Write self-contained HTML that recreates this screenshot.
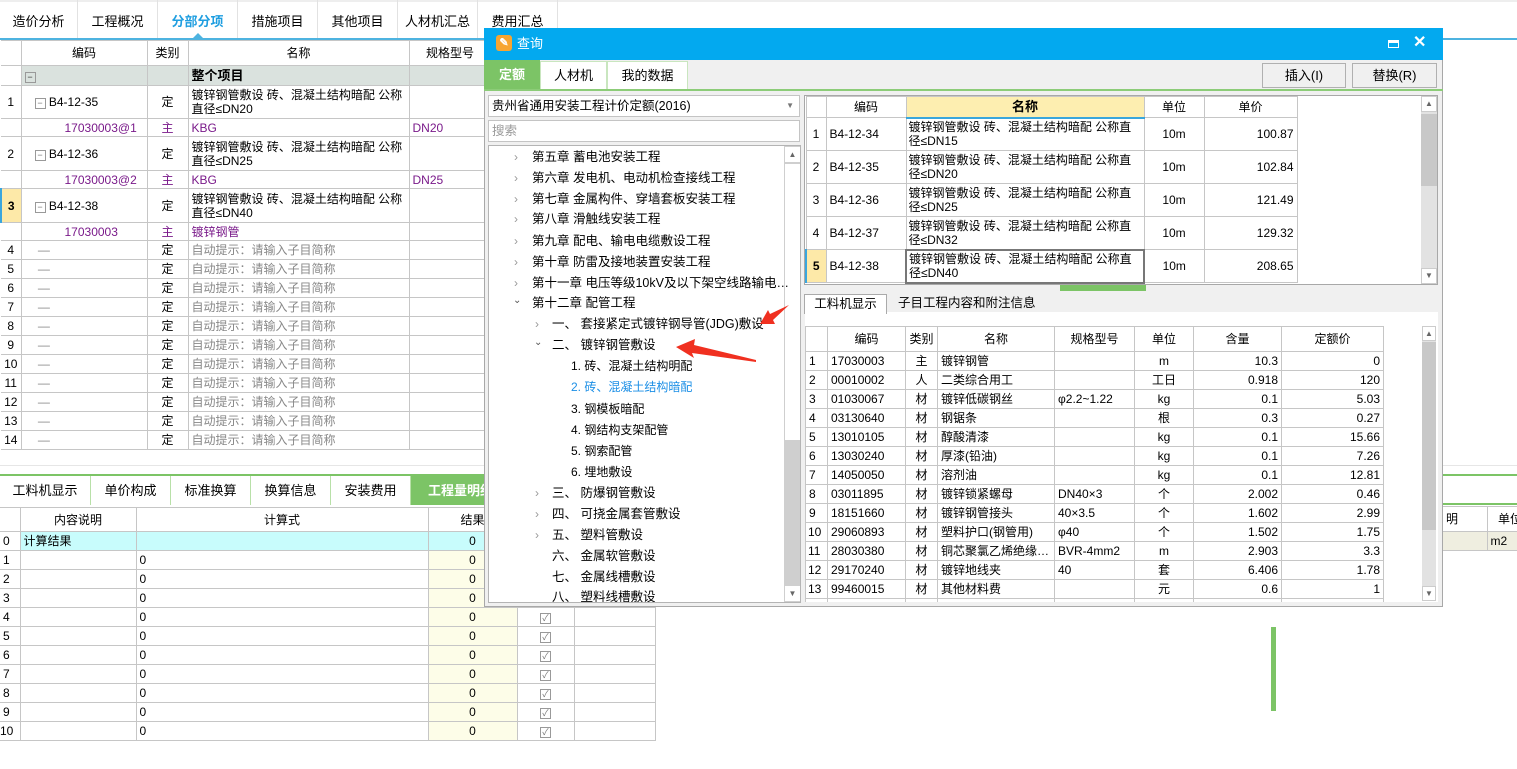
<!DOCTYPE html>
<html><head><meta charset="utf-8"><style>
*{box-sizing:border-box;margin:0;padding:0}
body{width:1517px;height:769px;overflow:hidden;background:#fff;position:relative;font:12px "Liberation Sans","Noto Sans CJK SC",sans-serif;color:#000}
.a{position:absolute}
table{border-collapse:collapse;table-layout:fixed;position:absolute}
td{border:1px solid #c6c6c6;padding:0 3px;white-space:nowrap;overflow:hidden;line-height:14px}
.c{text-align:center}.r{text-align:right}
.pu{color:#7a1a8a}.gr{color:#888}
.tab{position:absolute;top:0;height:38px;line-height:44px;text-align:center;font-size:13px;border-right:1px solid #e2e2e2}
.btab{position:absolute;height:29px;line-height:30px;text-align:center;font-size:13px;border-right:1px solid #b8e0a8;background:#fff}
.ti{position:absolute;white-space:nowrap;font-size:12.5px;height:20px;line-height:20px}
.chev{position:absolute;color:#999;font-size:12px}
.cb{display:inline-block;width:11px;height:11px;border:1px solid #999;font-size:9px;line-height:9px;color:#777;text-align:center}
</style></head><body>

<div class="a" style="left:0;top:0;width:1517px;height:2px;background:#eee"></div>
<div class="tab" style="left:0;width:78px">造价分析</div>
<div class="tab" style="left:78px;width:80px">工程概况</div>
<div class="tab" style="left:158px;width:80px;color:#1f9ee0;font-weight:bold">分部分项</div>
<div class="tab" style="left:238px;width:80px">措施项目</div>
<div class="tab" style="left:318px;width:80px">其他项目</div>
<div class="tab" style="left:398px;width:80px">人材机汇总</div>
<div class="tab" style="left:478px;width:80px">费用汇总</div>
<div class="a" style="left:0;top:38px;width:1517px;height:2px;background:#4db3e0"></div>
<div class="a" style="left:193px;top:33px;width:0;height:0;border-left:5px solid transparent;border-right:5px solid transparent;border-bottom:5px solid #4db3e0"></div>

<table style="left:0;top:40px;width:490px">
<colgroup><col style="width:20px"><col style="width:126px"><col style="width:41px"><col style="width:221px"><col style="width:82px"></colgroup>
<tr style="height:25px"><td style="border-left:0"></td><td class="c">编码</td><td class="c">类别</td><td class="c">名称</td><td class="c">规格型号</td></tr>
<tr style="height:20px;background:#dae2de"><td style="background:#fff;border-left:0"></td><td><span class="cb" style="color:#333">−</span></td><td></td><td style="font-weight:bold;font-size:13px">整个项目</td><td></td></tr>
<tr style="height:33px"><td class="c" style="border-left:0">1</td><td>&nbsp;&nbsp;&nbsp;<span class="cb">−</span> B4-12-35</td><td class="c">定</td><td style="white-space:normal">镀锌钢管敷设 砖、混凝土结构暗配 公称直径≤DN20</td><td></td></tr>
<tr style="height:18px"><td style="border-left:0"></td><td class="pu">&nbsp;&nbsp;&nbsp;&nbsp;&nbsp;&nbsp;&nbsp;&nbsp;&nbsp;&nbsp;&nbsp;&nbsp;17030003@1</td><td class="c pu">主</td><td class="pu">KBG</td><td class="pu">DN20</td></tr>
<tr style="height:34px"><td class="c" style="border-left:0">2</td><td>&nbsp;&nbsp;&nbsp;<span class="cb">−</span> B4-12-36</td><td class="c">定</td><td style="white-space:normal">镀锌钢管敷设 砖、混凝土结构暗配 公称直径≤DN25</td><td></td></tr>
<tr style="height:18px"><td style="border-left:0"></td><td class="pu">&nbsp;&nbsp;&nbsp;&nbsp;&nbsp;&nbsp;&nbsp;&nbsp;&nbsp;&nbsp;&nbsp;&nbsp;17030003@2</td><td class="c pu">主</td><td class="pu">KBG</td><td class="pu">DN25</td></tr>
<tr style="height:34px"><td class="c" style="background:#fde9a8;font-weight:bold;border-left:2px solid #3aa6dd">3</td><td>&nbsp;&nbsp;&nbsp;<span class="cb">−</span> B4-12-38</td><td class="c">定</td><td style="white-space:normal">镀锌钢管敷设 砖、混凝土结构暗配 公称直径≤DN40</td><td></td></tr>
<tr style="height:18px"><td style="border-left:0"></td><td class="pu">&nbsp;&nbsp;&nbsp;&nbsp;&nbsp;&nbsp;&nbsp;&nbsp;&nbsp;&nbsp;&nbsp;&nbsp;17030003</td><td class="c pu">主</td><td class="pu">镀锌钢管</td><td></td></tr>
<tr style="height:19px"><td class="c" style="border-left:0">4</td><td><span class="gr">&nbsp;&nbsp;&nbsp;&nbsp;—</span></td><td class="c">定</td><td class="gr">自动提示：请输入子目简称</td><td></td></tr>
<tr style="height:19px"><td class="c" style="border-left:0">5</td><td><span class="gr">&nbsp;&nbsp;&nbsp;&nbsp;—</span></td><td class="c">定</td><td class="gr">自动提示：请输入子目简称</td><td></td></tr>
<tr style="height:19px"><td class="c" style="border-left:0">6</td><td><span class="gr">&nbsp;&nbsp;&nbsp;&nbsp;—</span></td><td class="c">定</td><td class="gr">自动提示：请输入子目简称</td><td></td></tr>
<tr style="height:19px"><td class="c" style="border-left:0">7</td><td><span class="gr">&nbsp;&nbsp;&nbsp;&nbsp;—</span></td><td class="c">定</td><td class="gr">自动提示：请输入子目简称</td><td></td></tr>
<tr style="height:19px"><td class="c" style="border-left:0">8</td><td><span class="gr">&nbsp;&nbsp;&nbsp;&nbsp;—</span></td><td class="c">定</td><td class="gr">自动提示：请输入子目简称</td><td></td></tr>
<tr style="height:19px"><td class="c" style="border-left:0">9</td><td><span class="gr">&nbsp;&nbsp;&nbsp;&nbsp;—</span></td><td class="c">定</td><td class="gr">自动提示：请输入子目简称</td><td></td></tr>
<tr style="height:19px"><td class="c" style="border-left:0">10</td><td><span class="gr">&nbsp;&nbsp;&nbsp;&nbsp;—</span></td><td class="c">定</td><td class="gr">自动提示：请输入子目简称</td><td></td></tr>
<tr style="height:19px"><td class="c" style="border-left:0">11</td><td><span class="gr">&nbsp;&nbsp;&nbsp;&nbsp;—</span></td><td class="c">定</td><td class="gr">自动提示：请输入子目简称</td><td></td></tr>
<tr style="height:19px"><td class="c" style="border-left:0">12</td><td><span class="gr">&nbsp;&nbsp;&nbsp;&nbsp;—</span></td><td class="c">定</td><td class="gr">自动提示：请输入子目简称</td><td></td></tr>
<tr style="height:19px"><td class="c" style="border-left:0">13</td><td><span class="gr">&nbsp;&nbsp;&nbsp;&nbsp;—</span></td><td class="c">定</td><td class="gr">自动提示：请输入子目简称</td><td></td></tr>
<tr style="height:19px"><td class="c" style="border-left:0">14</td><td><span class="gr">&nbsp;&nbsp;&nbsp;&nbsp;—</span></td><td class="c">定</td><td class="gr">自动提示：请输入子目简称</td><td></td></tr>
</table>

<div class="a" style="left:0;top:465px;width:1517px;height:1px;background:#e6e6e6"></div>
<div class="a" style="left:0;top:474px;width:1517px;height:31px;border-top:2px solid #7cc466;border-bottom:2px solid #7cc466;background:#fff"></div>
<div class="btab" style="left:0;top:476px;width:91px">工料机显示</div>
<div class="btab" style="left:91px;top:476px;width:80px">单价构成</div>
<div class="btab" style="left:171px;top:476px;width:80px">标准换算</div>
<div class="btab" style="left:251px;top:476px;width:80px">换算信息</div>
<div class="btab" style="left:331px;top:476px;width:80px">安装费用</div>
<div class="btab" style="left:411px;top:476px;width:100px;background:#7cc466;color:#fff;font-weight:bold">工程量明细</div>

<table style="left:0;top:507px;width:655px">
<colgroup><col style="width:20px"><col style="width:116px"><col style="width:292px"><col style="width:89px"><col style="width:57px"><col style="width:81px"></colgroup>
<tr style="height:24px"><td style="border-left:0"></td><td class="c">内容说明</td><td class="c">计算式</td><td class="c">结果</td><td></td><td></td></tr>
<tr style="height:19px;background:#c8fcfc"><td style="background:#fff;border-left:0">0</td><td>计算结果</td><td></td><td class="c">0</td><td></td><td></td></tr>
<tr style="height:19px"><td style="border-left:0">1</td><td></td><td>0</td><td class="c" style="background:#fdfde8">0</td><td class="c"><span class="cb">✓</span></td><td></td></tr>
<tr style="height:19px"><td style="border-left:0">2</td><td></td><td>0</td><td class="c" style="background:#fdfde8">0</td><td class="c"><span class="cb">✓</span></td><td></td></tr>
<tr style="height:19px"><td style="border-left:0">3</td><td></td><td>0</td><td class="c" style="background:#fdfde8">0</td><td class="c"><span class="cb">✓</span></td><td></td></tr>
<tr style="height:19px"><td style="border-left:0">4</td><td></td><td>0</td><td class="c" style="background:#fdfde8">0</td><td class="c"><span class="cb">✓</span></td><td></td></tr>
<tr style="height:19px"><td style="border-left:0">5</td><td></td><td>0</td><td class="c" style="background:#fdfde8">0</td><td class="c"><span class="cb">✓</span></td><td></td></tr>
<tr style="height:19px"><td style="border-left:0">6</td><td></td><td>0</td><td class="c" style="background:#fdfde8">0</td><td class="c"><span class="cb">✓</span></td><td></td></tr>
<tr style="height:19px"><td style="border-left:0">7</td><td></td><td>0</td><td class="c" style="background:#fdfde8">0</td><td class="c"><span class="cb">✓</span></td><td></td></tr>
<tr style="height:19px"><td style="border-left:0">8</td><td></td><td>0</td><td class="c" style="background:#fdfde8">0</td><td class="c"><span class="cb">✓</span></td><td></td></tr>
<tr style="height:19px"><td style="border-left:0">9</td><td></td><td>0</td><td class="c" style="background:#fdfde8">0</td><td class="c"><span class="cb">✓</span></td><td></td></tr>
<tr style="height:19px"><td style="padding:0;border-left:0">10</td><td></td><td>0</td><td class="c" style="background:#fdfde8">0</td><td class="c"><span class="cb">✓</span></td><td></td></tr>
</table>

<table style="left:1443px;top:506px;width:90px">
<colgroup><col style="width:44px"><col style="width:46px"></colgroup>
<tr style="height:25px"><td style="border-left:0">明</td><td class="c">单位</td></tr>
<tr style="height:19px;background:#efeee0"><td style="border-left:0"></td><td>m2</td></tr>
</table>
<div class="a" style="left:1271px;top:627px;width:5px;height:84px;background:#7cc466"></div>

<div class="a" style="left:484px;top:28px;width:959px;height:579px;background:#f0f0f0;border:1px solid #a8a8a8"></div>
<div class="a" style="left:484px;top:28px;width:959px;height:32px;background:#03a9ef"></div>
<div class="a" style="left:496px;top:35px;width:16px;height:16px;background:#f7a531;border-radius:3px;color:#fff;font-size:11px;line-height:16px;text-align:center;font-weight:bold">✎</div>
<div class="a" style="left:517px;top:35px;color:#fff;font-size:13px;line-height:18px">查询</div>
<div class="a" style="left:1388px;top:40px;width:11px;height:8px;border:1px solid #fff;border-top-width:3px"></div>
<div class="a" style="left:1413px;top:32px;color:#fff;font-size:16px;font-weight:bold">✕</div>
<div class="a" style="left:484px;top:60px;width:56px;height:30px;background:#7cc466;color:#fff;font-weight:bold;font-size:13px;line-height:30px;text-align:center">定额</div>
<div class="a" style="left:540px;top:61px;width:67px;height:29px;background:#fff;border:1px solid #c9e6bf;font-size:13px;line-height:28px;text-align:center">人材机</div>
<div class="a" style="left:607px;top:61px;width:81px;height:29px;background:#fff;border:1px solid #c9e6bf;font-size:13px;line-height:28px;text-align:center">我的数据</div>
<div class="a" style="left:484px;top:89px;width:959px;height:2px;background:#8ccc78"></div>
<div class="a" style="left:1262px;top:63px;width:84px;height:25px;border:1px solid #b0b0b0;background:#f0f0f0;text-align:center;line-height:23px;font-size:13px">插入(I)</div>
<div class="a" style="left:1352px;top:63px;width:85px;height:25px;border:1px solid #b0b0b0;background:#f0f0f0;text-align:center;line-height:23px;font-size:13px">替换(R)</div>

<div class="a" style="left:488px;top:95px;width:312px;height:22px;background:#fff;border:1px solid #c4c4c4;line-height:20px;padding-left:3px;font-size:12.5px">贵州省通用安装工程计价定额(2016)<span style="position:absolute;right:5px;color:#777;font-size:8px">▼</span></div>
<div class="a" style="left:488px;top:120px;width:312px;height:22px;background:#fff;border:1px solid #c4c4c4;line-height:20px;padding-left:3px;color:#999;font-size:12.5px">搜索</div>
<div class="a" style="left:488px;top:145px;width:313px;height:458px;background:#fff;border:1px solid #b4b4b4;overflow:hidden">
<div class="a" style="left:295px;top:0;width:17px;height:456px;background:#cfcfcf"></div>
<div class="a" style="left:295px;top:17px;width:17px;height:278px;background:#fff;border:1px solid #cfcfcf"></div>
<div class="a" style="left:295px;top:0;width:17px;height:17px;background:#fff;border:1px solid #cfcfcf;font-size:8px;text-align:center;line-height:15px;color:#666">▲</div>
<div class="a" style="left:295px;top:439px;width:17px;height:17px;background:#fff;border:1px solid #cfcfcf;font-size:8px;text-align:center;line-height:15px;color:#666">▼</div>
</div>
<div class="chev" style="left:514px;top:150px">›</div><div class="ti" style="left:532px;top:147px">第五章 蓄电池安装工程</div>
<div class="chev" style="left:514px;top:171px">›</div><div class="ti" style="left:532px;top:168px">第六章 发电机、电动机检查接线工程</div>
<div class="chev" style="left:514px;top:192px">›</div><div class="ti" style="left:532px;top:189px">第七章 金属构件、穿墙套板安装工程</div>
<div class="chev" style="left:514px;top:212px">›</div><div class="ti" style="left:532px;top:209px">第八章 滑触线安装工程</div>
<div class="chev" style="left:514px;top:234px">›</div><div class="ti" style="left:532px;top:231px">第九章 配电、输电电缆敷设工程</div>
<div class="chev" style="left:514px;top:255px">›</div><div class="ti" style="left:532px;top:252px">第十章 防雷及接地装置安装工程</div>
<div class="chev" style="left:514px;top:276px">›</div><div class="ti" style="left:532px;top:273px">第十一章 电压等级10kV及以下架空线路输电…</div>
<div class="chev" style="left:513px;top:295px;color:#555;font-size:10px">⌄</div><div class="ti" style="left:532px;top:293px">第十二章 配管工程</div>
<div class="chev" style="left:535px;top:317px">›</div><div class="ti" style="left:552px;top:314px">一、 套接紧定式镀锌钢导管(JDG)敷设</div>
<div class="chev" style="left:534px;top:337px;color:#555;font-size:10px">⌄</div><div class="ti" style="left:552px;top:335px">二、 镀锌钢管敷设</div>
<div class="ti" style="left:571px;top:356px;font-size:12px">1. 砖、混凝土结构明配</div>
<div class="ti" style="left:571px;top:377px;font-size:12px;color:#1c8fe6">2. 砖、混凝土结构暗配</div>
<div class="ti" style="left:571px;top:399px;font-size:12px">3. 钢模板暗配</div>
<div class="ti" style="left:571px;top:420px;font-size:12px">4. 钢结构支架配管</div>
<div class="ti" style="left:571px;top:441px;font-size:12px">5. 钢索配管</div>
<div class="ti" style="left:571px;top:462px;font-size:12px">6. 埋地敷设</div>
<div class="chev" style="left:535px;top:486px">›</div><div class="ti" style="left:552px;top:483px">三、 防爆钢管敷设</div>
<div class="chev" style="left:535px;top:507px">›</div><div class="ti" style="left:552px;top:504px">四、 可挠金属套管敷设</div>
<div class="chev" style="left:535px;top:528px">›</div><div class="ti" style="left:552px;top:525px">五、 塑料管敷设</div>
<div class="ti" style="left:552px;top:546px">六、 金属软管敷设</div>
<div class="ti" style="left:552px;top:567px">七、 金属线槽敷设</div>
<div class="a" style="left:489px;top:587px;width:292px;height:15px;overflow:hidden"><div class="ti" style="left:63px;top:0">八、 塑料线槽敷设</div></div>

<svg class="a" style="left:480px;top:290px" width="320" height="80" viewBox="480 290 320 80">
<polygon points="789,305 773,320 775,324 760,324 768,310 770,314" fill="#f03020"/>
<polygon points="756,362 692,353 694,358 676,347 695,339 694,345 756,360" fill="#f03020"/>
</svg>

<div class="a" style="left:804px;top:95px;width:634px;height:190px;background:#fff;border:1px solid #a8a8a8"></div>
<table style="left:805px;top:96px;width:491px">
<colgroup><col style="width:20px"><col style="width:80px"><col style="width:238px"><col style="width:60px"><col style="width:93px"></colgroup>
<tr style="height:21px"><td></td><td class="c">编码</td><td class="c" style="background:#fdeeb0;font-weight:bold;font-size:13px;border-bottom:2px solid #39a6dc">名称</td><td class="c">单位</td><td class="c">单价</td></tr>
<tr style="height:33px"><td class="c">1</td><td>B4-12-34</td><td style="white-space:normal;padding:0 2px">镀锌钢管敷设 砖、混凝土结构暗配 公称直径≤DN15</td><td class="c">10m</td><td class="r">100.87</td></tr>
<tr style="height:33px"><td class="c">2</td><td>B4-12-35</td><td style="white-space:normal;padding:0 2px">镀锌钢管敷设 砖、混凝土结构暗配 公称直径≤DN20</td><td class="c">10m</td><td class="r">102.84</td></tr>
<tr style="height:33px"><td class="c">3</td><td>B4-12-36</td><td style="white-space:normal;padding:0 2px">镀锌钢管敷设 砖、混凝土结构暗配 公称直径≤DN25</td><td class="c">10m</td><td class="r">121.49</td></tr>
<tr style="height:33px"><td class="c">4</td><td>B4-12-37</td><td style="white-space:normal;padding:0 2px">镀锌钢管敷设 砖、混凝土结构暗配 公称直径≤DN32</td><td class="c">10m</td><td class="r">129.32</td></tr>
<tr style="height:33px"><td class="c" style="background:#fde9a8;font-weight:bold;border-left:2px solid #3aa6dd">5</td><td>B4-12-38</td><td style="white-space:normal;padding:0 2px;border:2px solid #777">镀锌钢管敷设 砖、混凝土结构暗配 公称直径≤DN40</td><td class="c">10m</td><td class="r">208.65</td></tr>
</table>
<div class="a" style="left:1421px;top:96px;width:16px;height:188px;background:#e2e2e2"></div>
<div class="a" style="left:1421px;top:114px;width:16px;height:72px;background:#c8c8c8"></div>
<div class="a" style="left:1421px;top:96px;width:16px;height:16px;background:#fff;border:1px solid #ccc;font-size:8px;text-align:center;line-height:14px;color:#666">▲</div>
<div class="a" style="left:1421px;top:268px;width:16px;height:16px;background:#fff;border:1px solid #ccc;font-size:8px;text-align:center;line-height:14px;color:#666">▼</div>
<div class="a" style="left:1060px;top:285px;width:86px;height:6px;background:#7cc466"></div>

<div class="a" style="left:805px;top:312px;width:633px;height:294px;background:#fff"></div>
<div class="a" style="left:804px;top:294px;width:83px;height:20px;border:1px solid #aaa;border-bottom:0;background:#fff;text-align:center;line-height:19px;font-size:12.5px">工料机显示</div>
<div class="a" style="left:898px;top:294px;line-height:19px;font-size:12.5px">子目工程内容和附注信息</div>

<table style="left:805px;top:326px;width:578px">
<colgroup><col style="width:22px"><col style="width:78px"><col style="width:32px"><col style="width:117px"><col style="width:80px"><col style="width:59px"><col style="width:88px"><col style="width:102px"></colgroup>
<tr style="height:25px"><td></td><td class="c">编码</td><td class="c">类别</td><td class="c">名称</td><td class="c">规格型号</td><td class="c">单位</td><td class="c">含量</td><td class="c">定额价</td></tr>
<tr style="height:19px"><td>1</td><td>17030003</td><td class="c">主</td><td>镀锌钢管</td><td></td><td class="c">m</td><td class="r">10.3</td><td class="r">0</td></tr>
<tr style="height:19px"><td>2</td><td>00010002</td><td class="c">人</td><td>二类综合用工</td><td></td><td class="c">工日</td><td class="r">0.918</td><td class="r">120</td></tr>
<tr style="height:19px"><td>3</td><td>01030067</td><td class="c">材</td><td>镀锌低碳钢丝</td><td>φ2.2~1.22</td><td class="c">kg</td><td class="r">0.1</td><td class="r">5.03</td></tr>
<tr style="height:19px"><td>4</td><td>03130640</td><td class="c">材</td><td>钢锯条</td><td></td><td class="c">根</td><td class="r">0.3</td><td class="r">0.27</td></tr>
<tr style="height:19px"><td>5</td><td>13010105</td><td class="c">材</td><td>醇酸清漆</td><td></td><td class="c">kg</td><td class="r">0.1</td><td class="r">15.66</td></tr>
<tr style="height:19px"><td>6</td><td>13030240</td><td class="c">材</td><td>厚漆(铅油)</td><td></td><td class="c">kg</td><td class="r">0.1</td><td class="r">7.26</td></tr>
<tr style="height:19px"><td>7</td><td>14050050</td><td class="c">材</td><td>溶剂油</td><td></td><td class="c">kg</td><td class="r">0.1</td><td class="r">12.81</td></tr>
<tr style="height:19px"><td>8</td><td>03011895</td><td class="c">材</td><td>镀锌锁紧螺母</td><td>DN40×3</td><td class="c">个</td><td class="r">2.002</td><td class="r">0.46</td></tr>
<tr style="height:19px"><td>9</td><td>18151660</td><td class="c">材</td><td>镀锌钢管接头</td><td>40×3.5</td><td class="c">个</td><td class="r">1.602</td><td class="r">2.99</td></tr>
<tr style="height:19px"><td style="padding:0 2px">10</td><td>29060893</td><td class="c">材</td><td>塑料护口(钢管用)</td><td>φ40</td><td class="c">个</td><td class="r">1.502</td><td class="r">1.75</td></tr>
<tr style="height:19px"><td style="padding:0 2px">11</td><td>28030380</td><td class="c">材</td><td>铜芯聚氯乙烯绝缘…</td><td>BVR-4mm2</td><td class="c">m</td><td class="r">2.903</td><td class="r">3.3</td></tr>
<tr style="height:19px"><td style="padding:0 2px">12</td><td>29170240</td><td class="c">材</td><td>镀锌地线夹</td><td>40</td><td class="c">套</td><td class="r">6.406</td><td class="r">1.78</td></tr>
<tr style="height:19px"><td style="padding:0 2px">13</td><td>99460015</td><td class="c">材</td><td>其他材料费</td><td></td><td class="c">元</td><td class="r">0.6</td><td class="r">1</td></tr>
<tr style="height:6px"><td></td><td></td><td></td><td></td><td></td><td></td><td></td><td></td></tr>
</table>
<div class="a" style="left:805px;top:602px;width:633px;height:4px;background:#f0f0f0"></div>
<div class="a" style="left:1422px;top:326px;width:14px;height:275px;background:#e2e2e2"></div>
<div class="a" style="left:1422px;top:342px;width:14px;height:188px;background:#c8c8c8"></div>
<div class="a" style="left:1422px;top:326px;width:14px;height:15px;background:#fff;border:1px solid #ccc;font-size:8px;text-align:center;line-height:13px;color:#666">▲</div>
<div class="a" style="left:1422px;top:586px;width:14px;height:15px;background:#fff;border:1px solid #ccc;font-size:8px;text-align:center;line-height:13px;color:#666">▼</div>

</body></html>
